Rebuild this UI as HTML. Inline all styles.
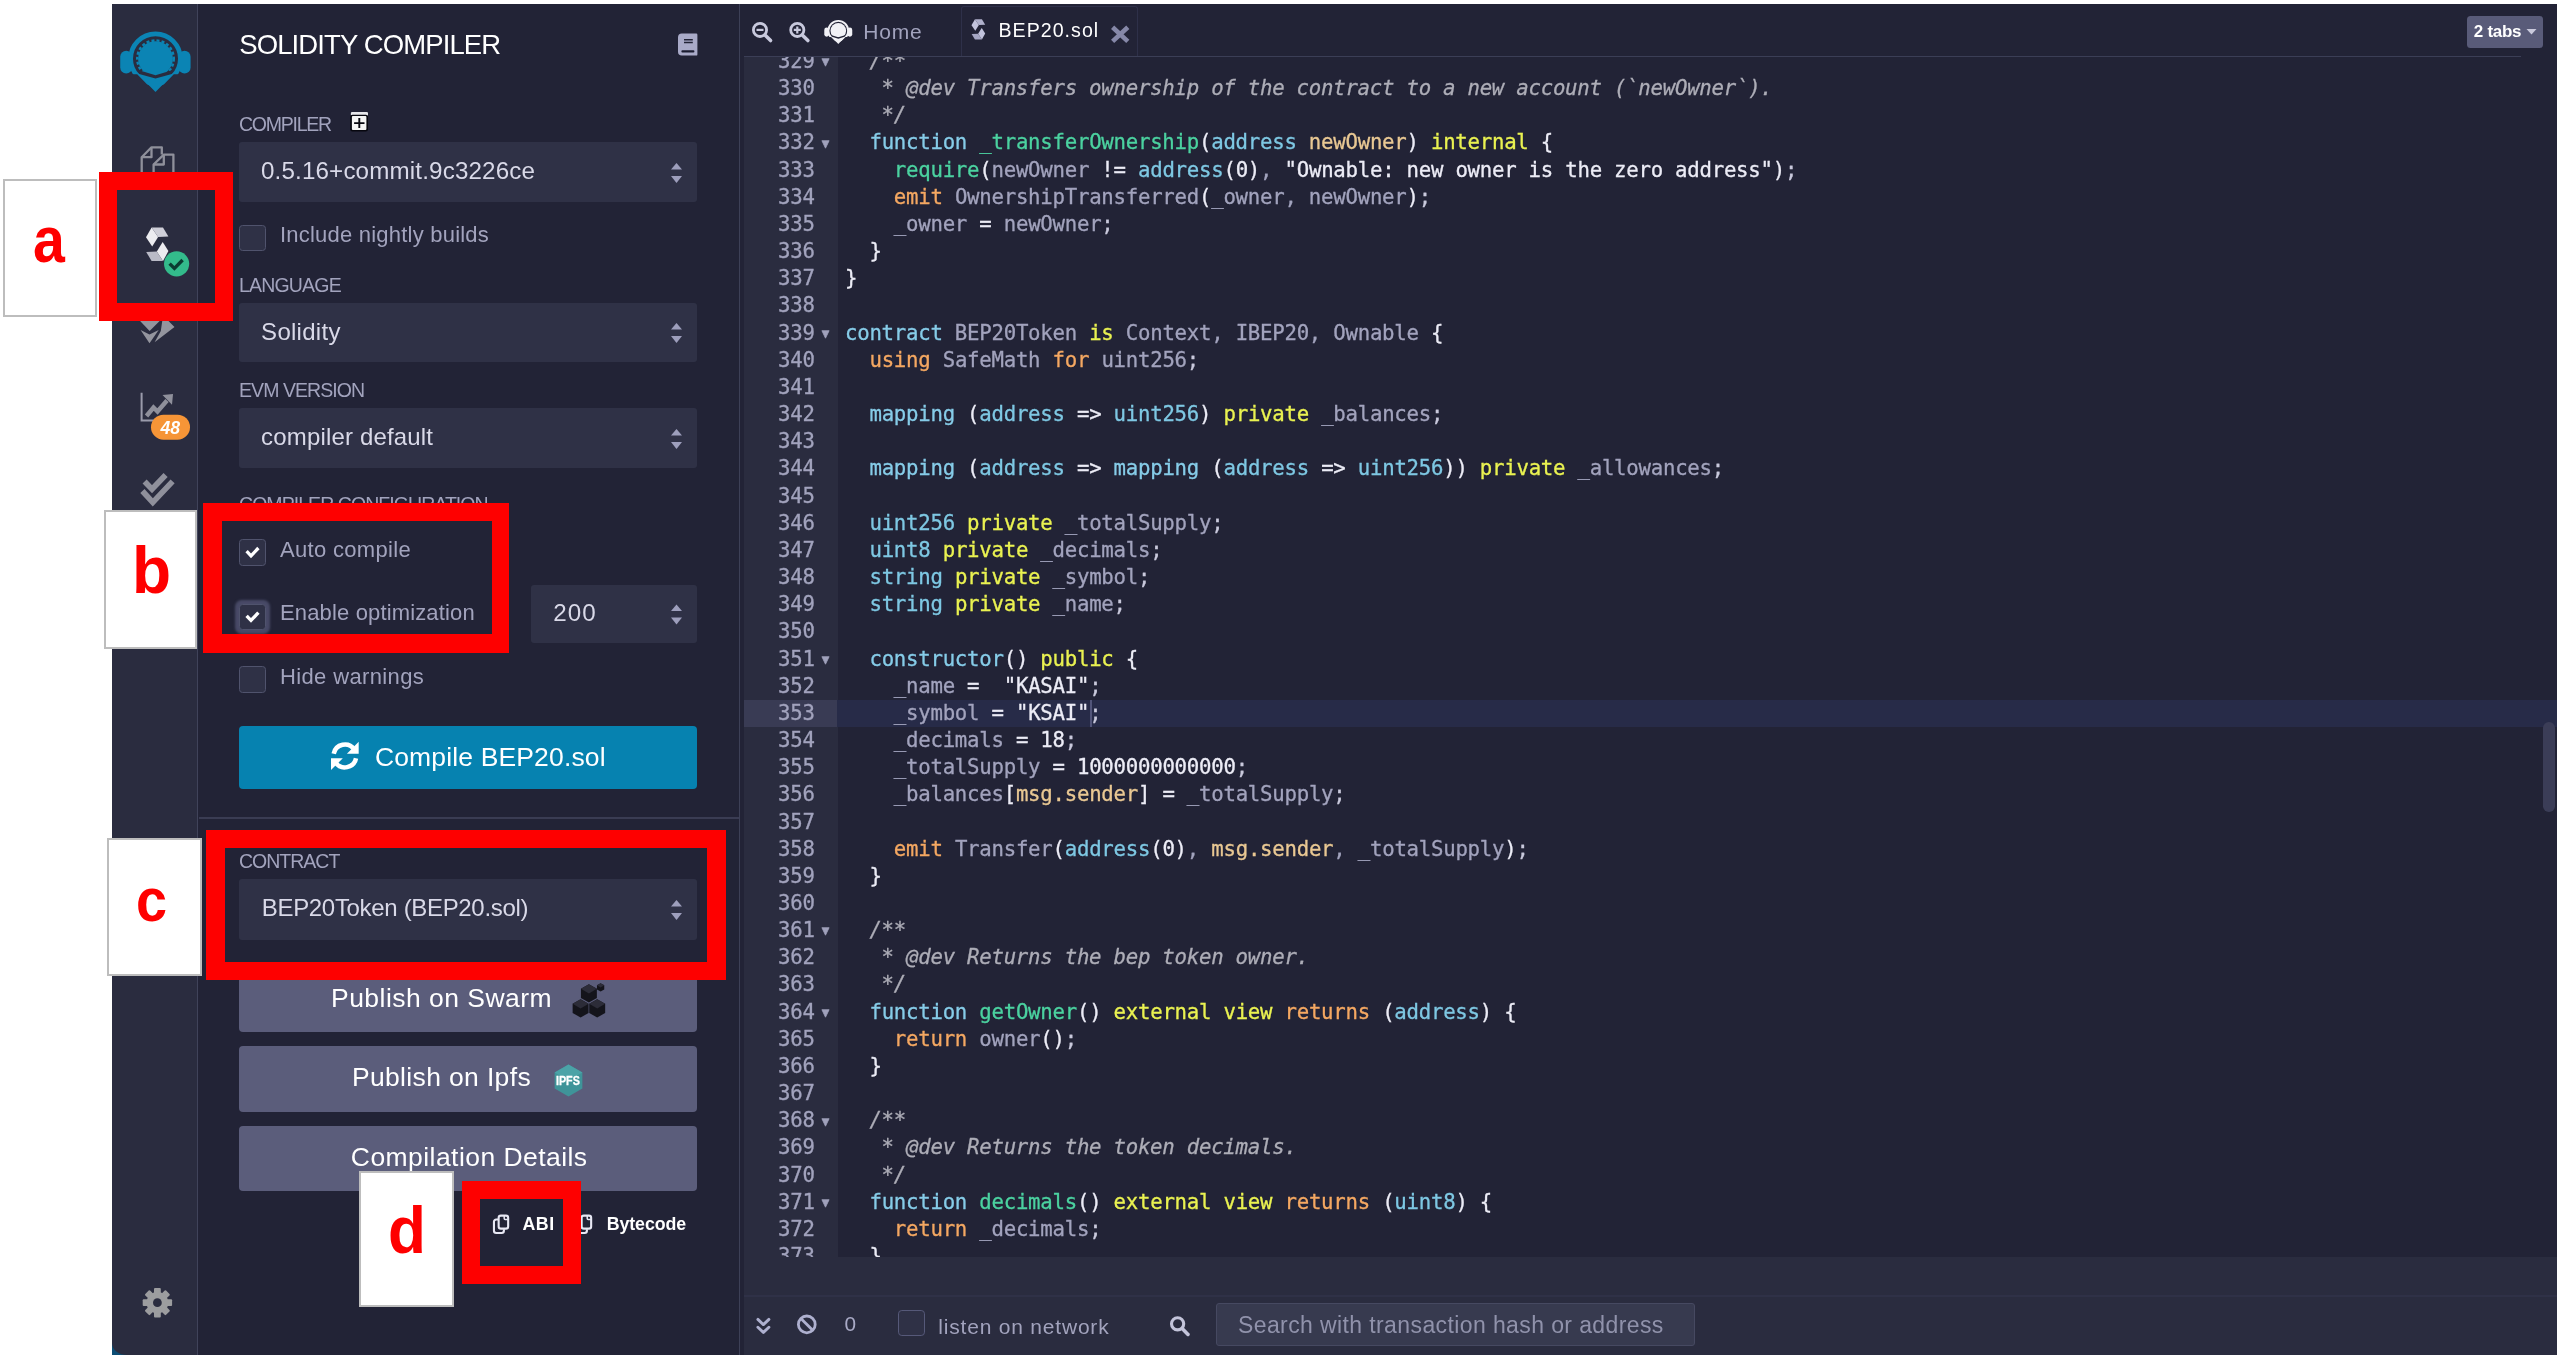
<!DOCTYPE html>
<html><head><meta charset="utf-8"><title>Remix - Solidity Compiler</title>
<style>
html,body{margin:0;padding:0}
body{width:2560px;height:1358px;background:#fff;position:relative;overflow:hidden;font-family:"Liberation Sans",sans-serif}
div,span{box-sizing:border-box}
.a{position:absolute}
.t{position:absolute;white-space:nowrap}
.ov{position:absolute;left:0;top:0;pointer-events:none}
#app{left:112px;top:4px;width:2445px;height:1351px;background:#222336;overflow:hidden}
.sel{position:absolute;left:239px;width:458px;background:#2f3146;border-radius:3px}
.cb{position:absolute;left:239.2px;width:26.6px;height:26.6px;background:#2f3146;border:1.3px solid #50536d;border-radius:3.5px}
.btn2{position:absolute;left:239px;width:458px;background:#5b5d7b;border-radius:4px}
.red{position:absolute;border:18.8px solid #fe0000}
.wb{position:absolute;background:#fff;border:2px solid #bdbdbd}
.lt{position:absolute;color:#fe0000;font-weight:700;font-family:"Liberation Sans",sans-serif;white-space:nowrap;transform-origin:0 0}
#ed{-webkit-text-stroke:0.3px;will-change:transform;position:absolute;left:0;top:0;width:2560px;height:1358px;font-family:"DejaVu Sans Mono","Liberation Mono",monospace;font-size:20.7px;letter-spacing:-0.25px}
.ln{position:absolute;left:744px;width:70.6px;text-align:right;height:27.165px;line-height:27.165px;color:#a2a3bd;white-space:pre}
.fold{position:absolute;left:819.5px;width:12px;height:27.165px;line-height:27.165px;font-size:13px;color:#8a8ba2;text-align:center;font-family:"DejaVu Sans",sans-serif}
.cl{position:absolute;left:845px;height:27.165px;line-height:27.165px;white-space:pre;color:#a2a3bd}
.c-k{color:#86cce8}.c-t{color:#7ec8e3}.c-ti{color:#7ec8e3}.c-f{color:#4bd2a0}.c-o{color:#f5a862}.c-y{color:#eaf251}.c-p{color:#e9c893}.c-w{color:#ececf6}.c-i{color:#a2a3bd}.c-c{color:#adadb7}.c-x{color:#c9c9dc}.c-c{font-style:italic}
</style></head><body>
<div id="app" class="a"></div>
<!-- icon panel -->
<div class="a" style="left:112px;top:1338px;width:18px;height:17px;background:#0c4d74"></div>
<div class="a" style="left:112px;top:4px;width:85.5px;height:1351px;background:#2a2c3f;border-bottom-left-radius:15px 12px"></div>
<div class="a" style="left:197.2px;top:4px;width:1.3px;height:1351px;background:#40435a"></div>
<!-- side panel right border -->
<div class="a" style="left:738.6px;top:4px;width:1.2px;height:1351px;background:#3d4057"></div>
<!-- side panel pieces -->
<div class="sel" style="top:141.8px;height:60.6px"></div>
<div class="cb" style="top:224.5px"></div>
<div class="sel" style="top:302.8px;height:58.8px"></div>
<div class="sel" style="top:407.8px;height:60.7px"></div>
<div class="cb" style="top:539.2px"></div>
<div class="cb" style="top:603.6px;box-shadow:0 0 2.5px 3.2px rgba(140,145,190,.36)"></div>
<div class="sel" style="left:531.3px;width:165.7px;top:584.5px;height:58.6px"></div>
<div class="cb" style="top:666px"></div>
<div class="a" style="left:239px;top:725.7px;width:458px;height:63.8px;background:#0682b0;border-radius:4px"></div>
<div class="a" style="left:198.5px;top:817.4px;width:540px;height:1.4px;background:#3a3c53"></div>
<div class="sel" style="top:878.6px;height:61.4px"></div>
<div class="btn2" style="top:968px;height:64px"></div>
<div class="btn2" style="top:1046.3px;height:65.6px"></div>
<div class="btn2" style="top:1126px;height:64.6px"></div>
<!-- editor -->
<div class="a" style="left:743.7px;top:57px;width:94px;height:1200px;background:#2a2c3f"></div>
<div class="a" style="left:743.7px;top:699.9px;width:93.4px;height:26.8px;background:#393b54"></div>
<div class="a" style="left:837.1px;top:699.9px;width:1719.9px;height:26.8px;background:#272b48"></div>
<div id="edclip" class="a" style="left:740px;top:57px;width:1817px;height:1200px;overflow:hidden"><div id="ed" style="left:-740px;top:-57px">
<div class="ln" style="top:47.88px">329</div>
<svg class="a" style="left:821px;top:58.13px" width="9" height="9" viewBox="0 0 9 9"><path d="M0.9 0.7 H8.1 L4.5 8.2 Z" fill="#a0a1bb" stroke="#a0a1bb" stroke-width="0.8" stroke-linejoin="round"/></svg>
<div class="cl" style="top:47.88px"><span class="c-c">  /**</span></div>
<div class="ln" style="top:75.05px">330</div>
<div class="cl" style="top:75.05px"><span class="c-c">   * @dev Transfers ownership of the contract to a new account (`newOwner`).</span></div>
<div class="ln" style="top:102.22px">331</div>
<div class="cl" style="top:102.22px"><span class="c-c">   */</span></div>
<div class="ln" style="top:129.38px">332</div>
<svg class="a" style="left:821px;top:139.63px" width="9" height="9" viewBox="0 0 9 9"><path d="M0.9 0.7 H8.1 L4.5 8.2 Z" fill="#a0a1bb" stroke="#a0a1bb" stroke-width="0.8" stroke-linejoin="round"/></svg>
<div class="cl" style="top:129.38px">  <span class="c-k">function</span> <span class="c-f">_transferOwnership</span><span class="c-w">(</span><span class="c-ti">address</span> <span class="c-p">newOwner</span><span class="c-w">)</span> <span class="c-y">internal</span> <span class="c-w">{</span></div>
<div class="ln" style="top:156.55px">333</div>
<div class="cl" style="top:156.55px">    <span class="c-f">require</span><span class="c-w">(</span><span class="c-i">newOwner</span> <span class="c-w">!=</span> <span class="c-ti">address</span><span class="c-w">(</span><span class="c-w">0</span><span class="c-w">)</span><span class="c-i">,</span> <span class="c-w">&quot;Ownable: new owner is the zero address&quot;</span><span class="c-w">)</span><span class="c-x">;</span></div>
<div class="ln" style="top:183.71px">334</div>
<div class="cl" style="top:183.71px">    <span class="c-o">emit</span> <span class="c-i">OwnershipTransferred</span><span class="c-w">(</span><span class="c-i">_owner,</span> <span class="c-i">newOwner</span><span class="c-w">)</span><span class="c-x">;</span></div>
<div class="ln" style="top:210.88px">335</div>
<div class="cl" style="top:210.88px">    <span class="c-i">_owner</span> <span class="c-w">=</span> <span class="c-i">newOwner</span><span class="c-x">;</span></div>
<div class="ln" style="top:238.04px">336</div>
<div class="cl" style="top:238.04px">  <span class="c-w">}</span></div>
<div class="ln" style="top:265.20px">337</div>
<div class="cl" style="top:265.20px"><span class="c-w">}</span></div>
<div class="ln" style="top:292.37px">338</div>
<div class="ln" style="top:319.53px">339</div>
<svg class="a" style="left:821px;top:329.78px" width="9" height="9" viewBox="0 0 9 9"><path d="M0.9 0.7 H8.1 L4.5 8.2 Z" fill="#a0a1bb" stroke="#a0a1bb" stroke-width="0.8" stroke-linejoin="round"/></svg>
<div class="cl" style="top:319.53px"><span class="c-k">contract</span> <span class="c-i">BEP20Token</span> <span class="c-y">is</span> <span class="c-i">Context, IBEP20, Ownable</span> <span class="c-w">{</span></div>
<div class="ln" style="top:346.70px">340</div>
<div class="cl" style="top:346.70px">  <span class="c-o">using</span> <span class="c-i">SafeMath</span> <span class="c-o">for</span> <span class="c-i">uint256</span><span class="c-x">;</span></div>
<div class="ln" style="top:373.87px">341</div>
<div class="ln" style="top:401.03px">342</div>
<div class="cl" style="top:401.03px">  <span class="c-k">mapping</span> <span class="c-w">(</span><span class="c-t">address</span> <span class="c-w">=&gt;</span> <span class="c-t">uint256</span><span class="c-w">)</span> <span class="c-y">private</span> <span class="c-i">_balances</span><span class="c-x">;</span></div>
<div class="ln" style="top:428.19px">343</div>
<div class="ln" style="top:455.36px">344</div>
<div class="cl" style="top:455.36px">  <span class="c-k">mapping</span> <span class="c-w">(</span><span class="c-t">address</span> <span class="c-w">=&gt;</span> <span class="c-k">mapping</span> <span class="c-w">(</span><span class="c-t">address</span> <span class="c-w">=&gt;</span> <span class="c-t">uint256</span><span class="c-w">))</span> <span class="c-y">private</span> <span class="c-i">_allowances</span><span class="c-x">;</span></div>
<div class="ln" style="top:482.52px">345</div>
<div class="ln" style="top:509.69px">346</div>
<div class="cl" style="top:509.69px">  <span class="c-t">uint256</span> <span class="c-y">private</span> <span class="c-i">_totalSupply</span><span class="c-x">;</span></div>
<div class="ln" style="top:536.86px">347</div>
<div class="cl" style="top:536.86px">  <span class="c-t">uint8</span> <span class="c-y">private</span> <span class="c-i">_decimals</span><span class="c-x">;</span></div>
<div class="ln" style="top:564.02px">348</div>
<div class="cl" style="top:564.02px">  <span class="c-t">string</span> <span class="c-y">private</span> <span class="c-i">_symbol</span><span class="c-x">;</span></div>
<div class="ln" style="top:591.18px">349</div>
<div class="cl" style="top:591.18px">  <span class="c-t">string</span> <span class="c-y">private</span> <span class="c-i">_name</span><span class="c-x">;</span></div>
<div class="ln" style="top:618.35px">350</div>
<div class="ln" style="top:645.51px">351</div>
<svg class="a" style="left:821px;top:655.76px" width="9" height="9" viewBox="0 0 9 9"><path d="M0.9 0.7 H8.1 L4.5 8.2 Z" fill="#a0a1bb" stroke="#a0a1bb" stroke-width="0.8" stroke-linejoin="round"/></svg>
<div class="cl" style="top:645.51px">  <span class="c-k">constructor</span><span class="c-w">()</span> <span class="c-y">public</span> <span class="c-w">{</span></div>
<div class="ln" style="top:672.68px">352</div>
<div class="cl" style="top:672.68px">    <span class="c-i">_name</span> <span class="c-w">=</span>  <span class="c-w">&quot;KASAI&quot;</span><span class="c-x">;</span></div>
<div class="ln" style="top:699.84px">353</div>
<div class="cl" style="top:699.84px">    <span class="c-i">_symbol</span> <span class="c-w">=</span> <span class="c-w">&quot;KSAI&quot;</span><span class="c-x">;</span></div>
<div class="ln" style="top:727.01px">354</div>
<div class="cl" style="top:727.01px">    <span class="c-i">_decimals</span> <span class="c-w">=</span> <span class="c-w">18</span><span class="c-x">;</span></div>
<div class="ln" style="top:754.17px">355</div>
<div class="cl" style="top:754.17px">    <span class="c-i">_totalSupply</span> <span class="c-w">=</span> <span class="c-w">1000000000000</span><span class="c-x">;</span></div>
<div class="ln" style="top:781.34px">356</div>
<div class="cl" style="top:781.34px">    <span class="c-i">_balances</span><span class="c-w">[</span><span class="c-p">msg.sender</span><span class="c-w">]</span> <span class="c-w">=</span> <span class="c-i">_totalSupply</span><span class="c-x">;</span></div>
<div class="ln" style="top:808.50px">357</div>
<div class="ln" style="top:835.67px">358</div>
<div class="cl" style="top:835.67px">    <span class="c-o">emit</span> <span class="c-i">Transfer</span><span class="c-w">(</span><span class="c-t">address</span><span class="c-w">(</span><span class="c-w">0</span><span class="c-w">)</span><span class="c-i">,</span> <span class="c-p">msg.sender</span><span class="c-i">,</span> <span class="c-i">_totalSupply</span><span class="c-w">)</span><span class="c-x">;</span></div>
<div class="ln" style="top:862.83px">359</div>
<div class="cl" style="top:862.83px">  <span class="c-w">}</span></div>
<div class="ln" style="top:890.00px">360</div>
<div class="ln" style="top:917.16px">361</div>
<svg class="a" style="left:821px;top:927.41px" width="9" height="9" viewBox="0 0 9 9"><path d="M0.9 0.7 H8.1 L4.5 8.2 Z" fill="#a0a1bb" stroke="#a0a1bb" stroke-width="0.8" stroke-linejoin="round"/></svg>
<div class="cl" style="top:917.16px"><span class="c-c">  /**</span></div>
<div class="ln" style="top:944.33px">362</div>
<div class="cl" style="top:944.33px"><span class="c-c">   * @dev Returns the bep token owner.</span></div>
<div class="ln" style="top:971.49px">363</div>
<div class="cl" style="top:971.49px"><span class="c-c">   */</span></div>
<div class="ln" style="top:998.66px">364</div>
<svg class="a" style="left:821px;top:1008.91px" width="9" height="9" viewBox="0 0 9 9"><path d="M0.9 0.7 H8.1 L4.5 8.2 Z" fill="#a0a1bb" stroke="#a0a1bb" stroke-width="0.8" stroke-linejoin="round"/></svg>
<div class="cl" style="top:998.66px">  <span class="c-k">function</span> <span class="c-f">getOwner</span><span class="c-w">()</span> <span class="c-y">external</span> <span class="c-y">view</span> <span class="c-o">returns</span> <span class="c-w">(</span><span class="c-t">address</span><span class="c-w">)</span> <span class="c-w">{</span></div>
<div class="ln" style="top:1025.83px">365</div>
<div class="cl" style="top:1025.83px">    <span class="c-o">return</span> <span class="c-i">owner</span><span class="c-w">()</span><span class="c-x">;</span></div>
<div class="ln" style="top:1052.99px">366</div>
<div class="cl" style="top:1052.99px">  <span class="c-w">}</span></div>
<div class="ln" style="top:1080.15px">367</div>
<div class="ln" style="top:1107.32px">368</div>
<svg class="a" style="left:821px;top:1117.57px" width="9" height="9" viewBox="0 0 9 9"><path d="M0.9 0.7 H8.1 L4.5 8.2 Z" fill="#a0a1bb" stroke="#a0a1bb" stroke-width="0.8" stroke-linejoin="round"/></svg>
<div class="cl" style="top:1107.32px"><span class="c-c">  /**</span></div>
<div class="ln" style="top:1134.48px">369</div>
<div class="cl" style="top:1134.48px"><span class="c-c">   * @dev Returns the token decimals.</span></div>
<div class="ln" style="top:1161.65px">370</div>
<div class="cl" style="top:1161.65px"><span class="c-c">   */</span></div>
<div class="ln" style="top:1188.81px">371</div>
<svg class="a" style="left:821px;top:1199.06px" width="9" height="9" viewBox="0 0 9 9"><path d="M0.9 0.7 H8.1 L4.5 8.2 Z" fill="#a0a1bb" stroke="#a0a1bb" stroke-width="0.8" stroke-linejoin="round"/></svg>
<div class="cl" style="top:1188.81px">  <span class="c-k">function</span> <span class="c-f">decimals</span><span class="c-w">()</span> <span class="c-y">external</span> <span class="c-y">view</span> <span class="c-o">returns</span> <span class="c-w">(</span><span class="c-t">uint8</span><span class="c-w">)</span> <span class="c-w">{</span></div>
<div class="ln" style="top:1215.98px">372</div>
<div class="cl" style="top:1215.98px">    <span class="c-o">return</span> <span class="c-i">_decimals</span><span class="c-x">;</span></div>
<div class="ln" style="top:1243.14px">373</div>
<div class="cl" style="top:1243.14px">  <span class="c-w">}</span></div>
<div class="a" style="left:1090px;top:699.9px;width:2.2px;height:26.8px;background:#52557a"></div>
</div></div>
<!-- tab bar -->
<div class="a" style="left:743.7px;top:4px;width:1813.3px;height:53px;background:#222336"></div>
<div class="a" style="left:743.7px;top:55.6px;width:1777px;height:1.6px;background:#3b3e56"></div>
<div class="a" style="left:961.2px;top:6.4px;width:177px;height:50px;border:1.2px solid #2e3049;border-bottom:none;border-radius:3px 3px 0 0"></div>
<div class="a" style="left:2466.6px;top:15.5px;width:76.2px;height:32px;background:#595b79;border-radius:3.5px"></div>
<!-- scrollbar -->
<div class="a" style="left:2543.4px;top:721.6px;width:11.6px;height:90px;background:#3b3d57;border-radius:5.8px"></div>
<!-- terminal -->
<div class="a" style="left:743.7px;top:1256.6px;width:1813.3px;height:98.4px;background:#2a2c3f"></div>
<div class="a" style="left:743.7px;top:1295.4px;width:1813.3px;height:1.2px;background:#2f3147"></div>
<div class="a" style="left:898px;top:1309.8px;width:26.8px;height:26.4px;background:#2f3146;border:1.5px solid #565979;border-radius:3.8px"></div>
<div class="a" style="left:1215.6px;top:1302.6px;width:479.6px;height:43.2px;background:#373a4f;border:1.2px solid #464961;border-radius:3px"></div>
<svg class="ov" width="2560" height="1358" viewBox="0 0 2560 1358"><g transform="">
<clipPath id="rl1a"><polygon points="110,20 201,20 201,74.2 173.8,74.2 155.5,93 137.2,74.2 110,74.2"/></clipPath>
<clipPath id="rl1b"><polygon points="120,20 191,20 191,64.6 155.5,75.2 120,64.6"/></clipPath>
<circle cx="155.5" cy="58.7" r="24.9" fill="none" stroke="#0b84b4" stroke-width="4.8" clip-path="url(#rl1a)"/>
<rect x="120.2" y="50.8" width="12" height="22.8" rx="6" fill="#0b84b4"/>
<rect x="178.6" y="50.8" width="12" height="22.8" rx="6" fill="#0b84b4"/>
<g clip-path="url(#rl1b)"><circle cx="155.5" cy="58.7" r="17.4" fill="#0b84b4"/><circle cx="155.5" cy="58.7" r="18.3" fill="none" stroke="#0b84b4" stroke-width="2.4" stroke-dasharray="3 2.1"/></g>
<polygon points="137.4,73.4 155.5,78.6 173.6,73.4 155.5,91.9" fill="#0b84b4"/>
</g>
<g fill="none" stroke="#8f909b" stroke-width="2.3" stroke-linejoin="round">
<path d="M141.7 176 V157.2 L151.5 147.3 H161.8 V154.6"/><path d="M151.5 147.3 V157.2 H141.7"/>
<path d="M153.6 178 V164.5 L163.8 154.6 H173.4 V178"/><path d="M163.8 154.6 V164.5 H153.6"/></g>
<g transform="">
<polygon points="151.6,227.4 146,237.2 152.2,246.4 158.1,236.9" fill="#ececf0"/>
<polygon points="151.6,227.4 163,227.4 168.4,236.6 158.1,236.9" fill="#cfcfd8"/>
<polygon points="162.7,242.1 168.4,251.1 163,261.1 156.8,251.6" fill="#ececf0"/>
<polygon points="146.2,251.9 156.8,251.6 163,261.1 151.6,261.1" fill="#b9bac6"/>
</g>
<circle cx="176.6" cy="263.8" r="12.6" fill="#33bb8b"/><path d="M169.6 263.6 L174.4 268.4 L182.6 260" fill="none" stroke="#0b3b31" stroke-width="3.4"/>
<polygon points="140.1,318 159.6,318 159.6,321 149.6,331 140.1,321" fill="#94959e"/><polygon points="140.6,330 149.5,334.6 158.7,330 149.5,343.2" fill="#94959e"/><polygon points="162.7,318 168.5,321 174.5,327 154.6,342.2 160.8,331" fill="#94959e"/>
<path d="M141.6 392.8 V420.6 H160" fill="none" stroke="#9a9bab" stroke-width="2"/><path d="M146.5 416 L153.5 407.5 L157.5 411.5 L167 400.5" fill="none" stroke="#8f909b" stroke-width="4.4"/><polygon points="162.5,395 173,394 172,404.8" fill="#8f909b"/>
<rect x="151" y="414.7" width="39" height="25" rx="12.5" fill="#f69537"/>
<g fill="none" stroke="#8f909b" stroke-width="5.7"><path d="M144.6 481.6 L152 489.2 L165.6 475"/><path d="M142.4 491 L152.8 502.4 L172.6 481.4"/></g>
<g><rect x="154.00" y="1288.00" width="6.8" height="6.50" rx="1" transform="rotate(0 157.4 1302.7)" fill="#9c9d9f"/><rect x="154.00" y="1288.00" width="6.8" height="6.50" rx="1" transform="rotate(45 157.4 1302.7)" fill="#9c9d9f"/><rect x="154.00" y="1288.00" width="6.8" height="6.50" rx="1" transform="rotate(90 157.4 1302.7)" fill="#9c9d9f"/><rect x="154.00" y="1288.00" width="6.8" height="6.50" rx="1" transform="rotate(135 157.4 1302.7)" fill="#9c9d9f"/><rect x="154.00" y="1288.00" width="6.8" height="6.50" rx="1" transform="rotate(180 157.4 1302.7)" fill="#9c9d9f"/><rect x="154.00" y="1288.00" width="6.8" height="6.50" rx="1" transform="rotate(225 157.4 1302.7)" fill="#9c9d9f"/><rect x="154.00" y="1288.00" width="6.8" height="6.50" rx="1" transform="rotate(270 157.4 1302.7)" fill="#9c9d9f"/><rect x="154.00" y="1288.00" width="6.8" height="6.50" rx="1" transform="rotate(315 157.4 1302.7)" fill="#9c9d9f"/><circle cx="157.4" cy="1302.7" r="10.799999999999999" fill="#9c9d9f"/><circle cx="157.4" cy="1302.7" r="4.4" fill="#2a2c3f"/></g>
<g><path d="M681.8 33.5 H696.2 a1.2 1.2 0 0 1 1.2 1.2 V54.4 a1.2 1.2 0 0 1 -1.2 1.2 H681.8 a3.8 3.8 0 0 1 -3.8 -3.8 V37.3 a3.8 3.8 0 0 1 3.8 -3.8 z" fill="#a9aac8"/>
<path d="M684 39.7 H692.8 M684 42.5 H692.8" stroke="#222336" stroke-width="1.4"/><path d="M682.4 51.4 H693.4" stroke="#1b1c30" stroke-width="2.1" stroke-linecap="round"/></g>
<rect x="350.9" y="111.9" width="17.1" height="4" rx="1.2" fill="#e6e6ea"/><rect x="350.2" y="114.7" width="17.8" height="16.8" rx="2.2" fill="#07070f"/><rect x="351.9" y="116.1" width="14.5" height="13.9" rx="0.9" fill="#f5f5f5"/><path d="M359.3 118.1 V127.9 M354.1 123.1 H364.5" stroke="#07070f" stroke-width="1.9"/>
<polygon points="671.0,169.4 676.5,162.9 682.0,169.4" fill="#9d9ebc"/><polygon points="671.0,175.9 676.5,182.9 682.0,175.9" fill="#9d9ebc"/>
<polygon points="671.0,329.4 676.5,322.9 682.0,329.4" fill="#9d9ebc"/><polygon points="671.0,335.9 676.5,342.9 682.0,335.9" fill="#9d9ebc"/>
<polygon points="671.0,435.4 676.5,428.9 682.0,435.4" fill="#9d9ebc"/><polygon points="671.0,441.9 676.5,448.9 682.0,441.9" fill="#9d9ebc"/>
<polygon points="671.0,611 676.5,604.5 682.0,611" fill="#9d9ebc"/><polygon points="671.0,617.5 676.5,624.5 682.0,617.5" fill="#9d9ebc"/>
<polygon points="671.0,906.4 676.5,899.9 682.0,906.4" fill="#9d9ebc"/><polygon points="671.0,912.9 676.5,919.9 682.0,912.9" fill="#9d9ebc"/>
<g fill="none" stroke="#fff" stroke-width="4.5"><path d="M333.7 753.7 A11.4 11.4 0 0 1 354.2 749.4"/><path d="M356 758.2 A11.4 11.4 0 0 1 335.5 762.5"/></g>
<polygon points="358.7,741.8 358.7,753.7 346.9,753.7" fill="#fff"/><polygon points="331,770.1 331,758.2 342.8,758.2" fill="#fff"/>
<polygon points="588.57,1013.00 580.60,1017.60 572.63,1013.00 572.63,1003.80 580.60,999.20 588.57,1003.80" fill="#14141b"/><polygon points="580.60,1008.40 572.63,1003.80 580.60,999.20 588.57,1003.80" fill="#2c2c38"/><polygon points="605.17,1013.00 597.20,1017.60 589.23,1013.00 589.23,1003.80 597.20,999.20 605.17,1003.80" fill="#14141b"/><polygon points="597.20,1008.40 589.23,1003.80 597.20,999.20 605.17,1003.80" fill="#2c2c38"/><polygon points="596.87,998.00 588.90,1002.60 580.93,998.00 580.93,988.80 588.90,984.20 596.87,988.80" fill="#14141b"/><polygon points="588.90,993.40 580.93,988.80 588.90,984.20 596.87,988.80" fill="#2c2c38"/><polygon points="604.24,989.50 600.60,991.60 596.96,989.50 596.96,985.30 600.60,983.20 604.24,985.30" fill="#14141b"/><polygon points="600.60,987.40 596.96,985.30 600.60,983.20 604.24,985.30" fill="#2c2c38"/>
<polygon points="582.36,1088.40 568.50,1096.40 554.64,1088.40 554.64,1072.40 568.50,1064.40 582.36,1072.40" fill="#3f9499"/><polygon points="568.5,1080.4 554.64,1072.40 568.5,1064.40 582.36,1072.40" fill="#4ba3a7"/>
<g fill="none" stroke="#e8e8f4" stroke-width="2.1" stroke-linejoin="round">
<rect x="498.65" y="1215.65" width="9.5" height="13" rx="2.2"/>
<path d="M504.20 1215.80 v2.6 a1 1 0 0 0 1 1 h2.8" stroke-width="1.5"/>
<path d="M498.10 1219.55 H496.15 a2.2 2.2 0 0 0 -2.2 2.2 V1230.75 a2.2 2.2 0 0 0 2.2 2.2 H501.70 a2.2 2.2 0 0 0 2.2 -2.2 V1229.20"/>
</g>
<g fill="none" stroke="#e8e8f4" stroke-width="2.1" stroke-linejoin="round">
<rect x="581.65" y="1215.65" width="9.5" height="13" rx="2.2"/>
<path d="M587.20 1215.80 v2.6 a1 1 0 0 0 1 1 h2.8" stroke-width="1.5"/>
<path d="M581.10 1219.55 H579.15 a2.2 2.2 0 0 0 -2.2 2.2 V1230.75 a2.2 2.2 0 0 0 2.2 2.2 H584.70 a2.2 2.2 0 0 0 2.2 -2.2 V1229.20"/>
</g>
<g fill="none" stroke="#c8c9dd"><circle cx="760" cy="29.9" r="6.6" stroke-width="2.8"/><path d="M765.2 35.2 L770.6 40.6" stroke-width="3.5" stroke-linecap="round"/><path d="M756.5 29.9 H763.5" stroke-width="2.2"/>
<circle cx="797.3" cy="29.9" r="6.6" stroke-width="2.8"/><path d="M802.5 35.2 L807.9 40.6" stroke-width="3.5" stroke-linecap="round"/><path d="M793.8 29.9 H800.8 M797.3 26.4 V33.4" stroke-width="2.2"/></g>
<g transform="translate(776.54 7.41) scale(0.3972)">
<clipPath id="rl2a"><polygon points="110,20 201,20 201,74.2 173.8,74.2 155.5,93 137.2,74.2 110,74.2"/></clipPath>
<clipPath id="rl2b"><polygon points="120,20 191,20 191,64.6 155.5,75.2 120,64.6"/></clipPath>
<circle cx="155.5" cy="58.7" r="24.9" fill="none" stroke="#f1f1f6" stroke-width="4.8" clip-path="url(#rl2a)"/>
<rect x="120.2" y="50.8" width="12" height="22.8" rx="6" fill="#f1f1f6"/>
<rect x="178.6" y="50.8" width="12" height="22.8" rx="6" fill="#f1f1f6"/>
<g clip-path="url(#rl2b)"><circle cx="155.5" cy="58.7" r="19.6" fill="#f1f1f6"/></g>
<polygon points="137.4,73.4 155.5,78.6 173.6,73.4 155.5,91.9" fill="#f1f1f6"/>
</g>
<g transform="translate(882.21 -117.01) scale(0.6116 0.5994)">
<polygon points="151.6,227.4 146,237.2 152.2,246.4 158.1,236.9" fill="#c2c3dc"/>
<polygon points="151.6,227.4 163,227.4 168.4,236.6 158.1,236.9" fill="#b0b1cc"/>
<polygon points="162.7,242.1 168.4,251.1 163,261.1 156.8,251.6" fill="#c2c3dc"/>
<polygon points="146.2,251.9 156.8,251.6 163,261.1 151.6,261.1" fill="#a6a7c4"/>
</g>
<path d="M1112.6 27.2 L1127.8 41.4 M1127.8 27.2 L1112.6 41.4" stroke="#8688a8" stroke-width="4.6" fill="none"/>
<polygon points="2526.5,29 2536.5,29 2531.5,34.4" fill="#c9c9dc"/>
<g fill="none" stroke="#aeb0cf" stroke-width="2.9" stroke-linecap="round" stroke-linejoin="round"><path d="M757.9 1319.4 L763.4 1324.6 L768.9 1319.4"/><path d="M757.9 1327.2 L763.4 1332.4 L768.9 1327.2"/></g>
<circle cx="806.8" cy="1324.4" r="8.4" fill="none" stroke="#aeb0cf" stroke-width="2.8"/><path d="M800.9 1318.5 L812.7 1330.3" stroke="#aeb0cf" stroke-width="2.8"/>
<circle cx="1177.6" cy="1323.8" r="6.1" fill="none" stroke="#c3c4da" stroke-width="3.1"/><path d="M1182.4 1328.8 L1188 1334.4" stroke="#c3c4da" stroke-width="3.6" stroke-linecap="round"/>
<g fill="none" stroke="#fff" stroke-width="3.3"><path d="M246.6 551.2 L251 555.8 L258.4 548"/><path d="M246.6 615.8 L251 620.4 L258.4 612.6"/></g></svg>
<div id="txt" class="a" style="left:0;top:0;width:2560px;height:1358px;will-change:transform">
<span class="t" id="t_title" style="left:239.2px;top:31.4px;font-size:27.5px;line-height:27.5px;color:#ffffff;letter-spacing:-0.884px;">SOLIDITY COMPILER</span>
<span class="t" id="t_comp" style="left:239.0px;top:114.5px;font-size:19.5px;line-height:19.5px;color:#a2a3bd;letter-spacing:-1.241px;">COMPILER</span>
<span class="t" id="t_ver" style="left:261.0px;top:158.7px;font-size:24.2px;line-height:24.2px;color:#d9d9e8;letter-spacing:0.144px;">0.5.16+commit.9c3226ce</span>
<span class="t" id="t_night" style="left:280.0px;top:224.4px;font-size:22px;line-height:22px;color:#a2a3bd;letter-spacing:0.218px;">Include nightly builds</span>
<span class="t" id="t_lang" style="left:239.0px;top:275.5px;font-size:19.5px;line-height:19.5px;color:#a2a3bd;letter-spacing:-0.815px;">LANGUAGE</span>
<span class="t" id="t_sol" style="left:261.1px;top:319.5px;font-size:24px;line-height:24px;color:#d9d9e8;letter-spacing:0.281px;">Solidity</span>
<span class="t" id="t_evm" style="left:239.0px;top:381.0px;font-size:19.5px;line-height:19.5px;color:#a2a3bd;letter-spacing:-0.928px;">EVM VERSION</span>
<span class="t" id="t_cdef" style="left:261.1px;top:425.1px;font-size:24px;line-height:24px;color:#d9d9e8;letter-spacing:0.161px;">compiler default</span>
<span class="t" id="t_cconf" style="left:239.0px;top:494.5px;font-size:19.5px;line-height:19.5px;color:#a2a3bd;letter-spacing:-0.940px;">COMPILER CONFIGURATION</span>
<span class="t" id="t_auto" style="left:280.0px;top:538.8px;font-size:22px;line-height:22px;color:#a2a3bd;letter-spacing:0.321px;">Auto compile</span>
<span class="t" id="t_opt" style="left:280.0px;top:601.6px;font-size:22px;line-height:22px;color:#a2a3bd;letter-spacing:0.145px;">Enable optimization</span>
<span class="t" id="t_200" style="left:553.2px;top:600.7px;font-size:24.2px;line-height:24.2px;color:#d9d9e8;letter-spacing:1.096px;">200</span>
<span class="t" id="t_hide" style="left:280.0px;top:665.9px;font-size:22px;line-height:22px;color:#a2a3bd;letter-spacing:0.368px;">Hide warnings</span>
<span class="t" id="t_compile" style="left:374.9px;top:743.6px;font-size:26.5px;line-height:26.5px;color:#ffffff;letter-spacing:0.149px;">Compile BEP20.sol</span>
<span class="t" id="t_contract" style="left:239.0px;top:851.5px;font-size:19.5px;line-height:19.5px;color:#a2a3bd;letter-spacing:-0.994px;">CONTRACT</span>
<span class="t" id="t_bep" style="left:261.8px;top:895.9px;font-size:24px;line-height:24px;color:#d9d9e8;letter-spacing:-0.326px;">BEP20Token (BEP20.sol)</span>
<span class="t" id="t_swarm" style="left:331.0px;top:984.6px;font-size:26.5px;line-height:26.5px;color:#ffffff;letter-spacing:0.467px;">Publish on Swarm</span>
<span class="t" id="t_ipfs" style="left:351.9px;top:1064.3px;font-size:26.5px;line-height:26.5px;color:#ffffff;letter-spacing:0.353px;">Publish on Ipfs</span>
<span class="t" id="t_details" style="left:350.8px;top:1143.6px;font-size:26.5px;line-height:26.5px;color:#ffffff;letter-spacing:0.444px;">Compilation Details</span>
<span class="t" id="t_abi" style="left:522.5px;top:1216.3px;font-size:17.8px;line-height:17.8px;color:#ffffff;font-weight:700;letter-spacing:0.472px;">ABI</span>
<span class="t" id="t_byte" style="left:606.8px;top:1216.3px;font-size:17.8px;line-height:17.8px;color:#ffffff;font-weight:700;letter-spacing:-0.111px;">Bytecode</span>
<span class="t" id="t_home" style="left:863.2px;top:20.9px;font-size:21px;line-height:21px;color:#a2a3bd;letter-spacing:0.810px;">Home</span>
<span class="t" id="t_tab" style="left:998.5px;top:20.6px;font-size:19.6px;line-height:19.6px;color:#ffffff;letter-spacing:1.022px;">BEP20.sol</span>
<span class="t" id="t_2tabs" style="left:2473.8px;top:23.1px;font-size:17px;line-height:17px;color:#ffffff;font-weight:700;letter-spacing:-0.284px;">2 tabs</span>
<span class="t" id="t_zero" style="left:844.6px;top:1313.9px;font-size:20.8px;line-height:20.8px;color:#a9aac6;letter-spacing:0.870px;">0</span>
<span class="t" id="t_listen" style="left:938.3px;top:1316.4px;font-size:21px;line-height:21px;color:#a2a3bd;letter-spacing:0.798px;">listen on network</span>
<span class="t" id="t_search" style="left:1238.0px;top:1313.8px;font-size:23px;line-height:23px;color:#9092ab;letter-spacing:0.394px;">Search with transaction hash or address</span>
<span class="t" style="left:160.4px;top:418px;font-size:17.6px;line-height:20px;color:#fff;font-weight:700;font-style:italic">48</span>
<span class="t" style="left:555.6px;top:1073.8px;font-size:13.4px;line-height:14px;color:#fff;font-weight:700;-webkit-text-stroke:0.35px #fff;transform:scaleX(0.8);transform-origin:0 0">IPFS</span>
</div>
<!-- annotations -->
<div class="wb" style="left:3.3px;top:179.4px;width:93.9px;height:137.9px"></div>
<div class="wb" style="left:103.5px;top:510.3px;width:93.5px;height:138.4px"></div>
<div class="wb" style="left:107.1px;top:838.2px;width:94.7px;height:138px"></div>
<div class="wb" style="left:359.2px;top:1170.6px;width:94.5px;height:136.9px"></div>
<div class="red" style="left:99px;top:171.8px;width:134.3px;height:149px;border-width:18.5px 18.9px 18.3px 18.2px"></div>
<div class="red" style="left:202.9px;top:502.5px;width:306.5px;height:150.9px;border-width:18.5px 17.9px 19.4px 19.2px"></div>
<div class="red" style="left:206.4px;top:830.3px;width:519.4px;height:149.3px;border-width:18.7px 19.1px 18.4px 19.4px"></div>
<div class="red" style="left:461.9px;top:1181.2px;width:119px;height:102.5px;border-width:18.9px 18.8px 18.3px 18.9px"></div>
<span class="lt" id="la" style="left:32.5px;top:208.4px;font-size:64px;line-height:64px;transform:scaleX(0.895)">a</span>
<span class="lt" id="lb" style="left:132.1px;top:536.8px;font-size:66px;line-height:66px;transform:scaleX(0.97)">b</span>
<span class="lt" id="lc" style="left:135.9px;top:869px;font-size:62px;line-height:62px;transform:scaleX(0.9)">c</span>
<span class="lt" id="ld" style="left:388.3px;top:1197px;font-size:66px;line-height:66px;transform:scaleX(0.94)">d</span>
</body></html>
